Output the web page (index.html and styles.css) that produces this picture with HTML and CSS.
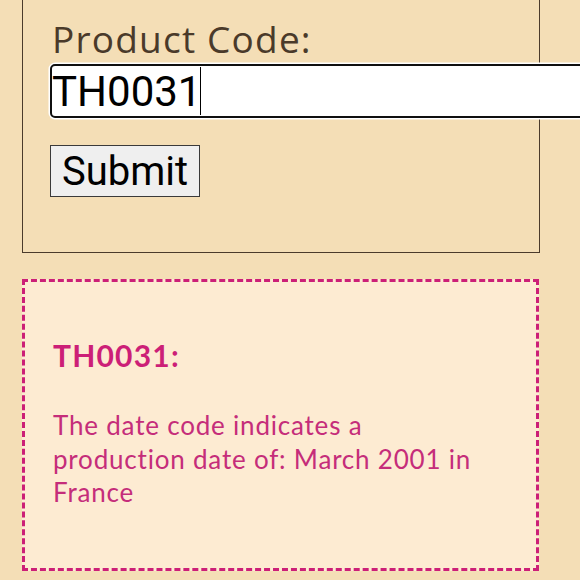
FILE: index.html
```html
<!DOCTYPE html>
<html lang="en">
<head>
    <meta charset="UTF-8">
    <meta name="viewport" content="width=device-width, initial-scale=1.0">
    <title>Date Code Lookup</title>
    <link rel="stylesheet" href="styles.css">
</head>
<body>
    <form class="lookup">
        <label class="lookup-label" for="code">Product Code:</label>
        <div class="field">
            <input class="code-input" id="code" type="text" value="TH0031">
            <span class="caret"></span>
        </div>
        <button class="submit-btn" type="button">Submit</button>
    </form>

    <div class="result">
        <h3 class="result-code">TH0031:</h3>
        <p class="result-text">The date code indicates a<br>production date of: March 2001 in<br>France</p>
    </div>
</body>
</html>
```

FILE: styles.css
```css
:root {
    --page-bg: #f4deb6;
    --panel-border: #4b3b2b;
    --label-color: #4a3a2a;
    --result-bg: #fdebd2;
    --accent: #cc1f77;
    --accent-text: #c52d7a;
}

html {
    overflow: hidden;
}

body {
    margin: 0;
    padding: 0 0 0 22px;
    background: var(--page-bg);
    font-family: 'Open Sans', sans-serif;
}

.lookup {
    width: 518px;
    box-sizing: border-box;
    margin-top: -12px;
    padding: 30px 29px 55px;
    border: 1px solid var(--panel-border);
}

.lookup-label {
    display: block;
    font-size: 37px;
    line-height: 40px;
    letter-spacing: 1.2px;
    color: var(--label-color);
    margin-bottom: 5px;
}

.field {
    position: relative;
    margin-left: -2px;
}

.code-input {
    display: block;
    width: 600px;
    height: 54px;
    box-sizing: border-box;
    padding: 1px 0;
    border: 2px solid #101010;
    border-radius: 5px;
    box-shadow: 0 0 0 1.5px #fff;
    background: #fff;
    font-family: Roboto, sans-serif;
    font-size: 42px;
    color: #000;
    outline: none;
}

/* text cursor of the focused field */
.caret {
    position: absolute;
    left: 150px;
    top: 3px;
    width: 1px;
    height: 48px;
    background: #000;
}

.submit-btn {
    display: block;
    margin: 27px 0 0 -2px;
    width: 150px;
    height: 52px;
    padding: 0 11px;
    border: 1px solid #3a3a3a;
    border-radius: 0;
    background: #efefef;
    font-family: Roboto, sans-serif;
    font-size: 40px;
    color: #000;
    text-align: left;
}

.result {
    width: 517px;
    box-sizing: border-box;
    margin-top: 26px;
    padding: 56px 28px 58px;
    border: 3px dashed var(--accent);
    background: var(--result-bg);
    font-family: Lato, sans-serif;
}

.result-code {
    margin: 0 0 37px;
    font-size: 30px;
    line-height: 34px;
    letter-spacing: 1.2px;
    font-weight: 700;
    color: var(--accent);
}

.result-text {
    margin: 0;
    font-size: 26px;
    line-height: 33.5px;
    letter-spacing: 0.8px;
    color: var(--accent-text);
}
```
